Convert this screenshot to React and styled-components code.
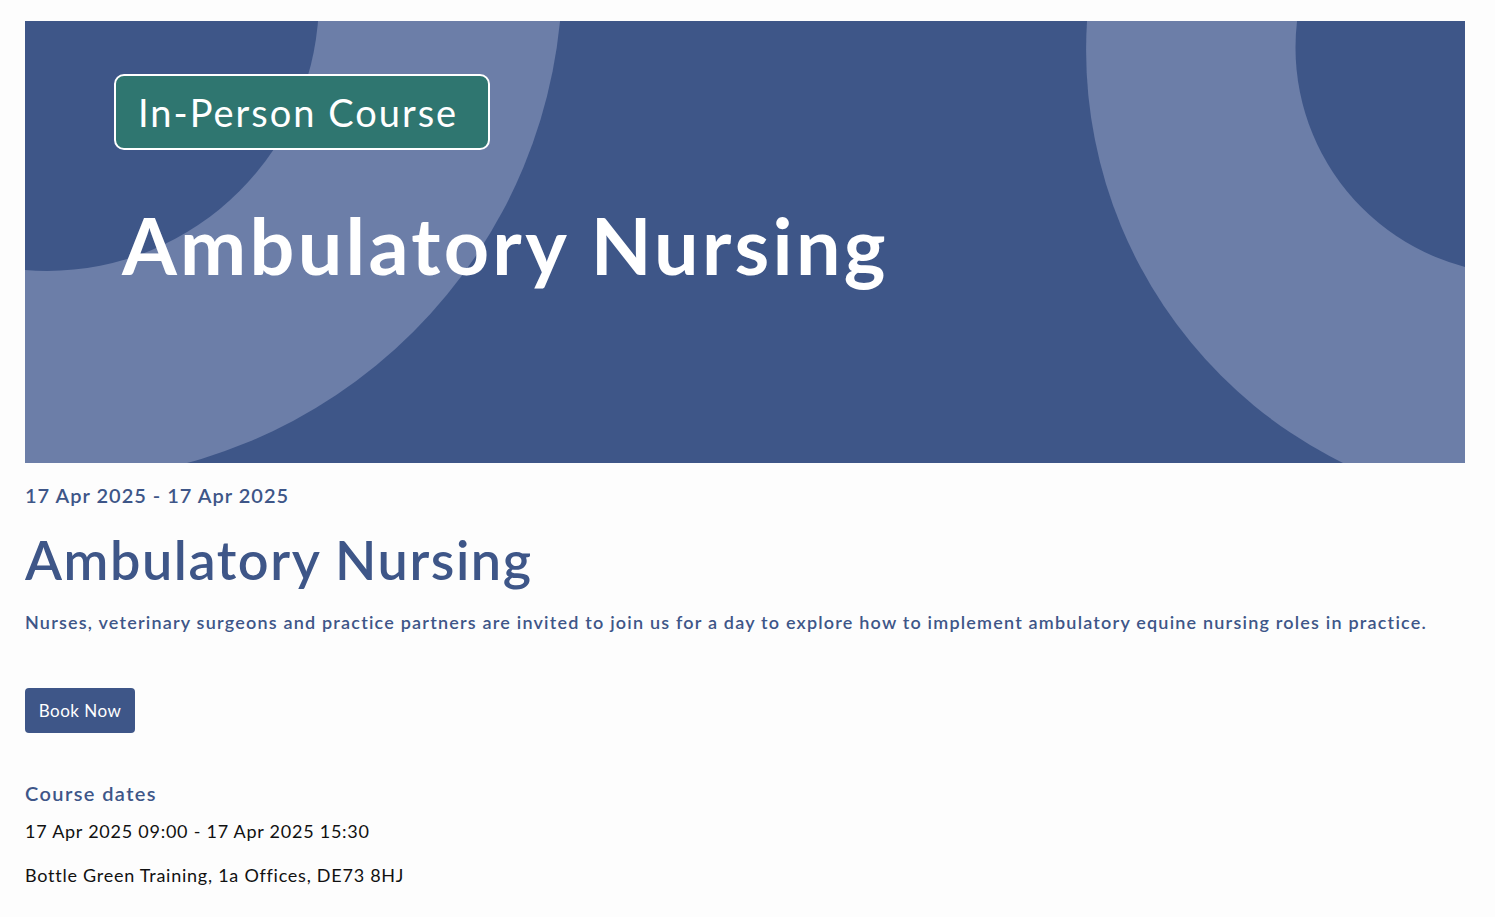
import React from "react";
import styled, { createGlobalStyle } from "styled-components";

const GlobalStyle = createGlobalStyle`
  body {
    margin: 0;
    background: #fdfdfd;
    font-family: Lato, "Open Sans", sans-serif;
  }
`;

const Page = styled.div`
  padding: 21px 30px 30px 25px;
`;

const Banner = styled.div`
  position: relative;
  height: 442px;
  background: #3e5688;
  overflow: hidden;
  padding: 53px 0 0 89px;
  box-sizing: border-box;
`;

const BannerArt = styled.svg`
  position: absolute;
  inset: 0;
  width: 100%;
  height: 100%;
`;

const BannerContent = styled.div`
  position: relative;
  display: flex;
  flex-direction: column;
  align-items: flex-start;
`;

const Badge = styled.div`
  width: 376px;
  height: 76px;
  box-sizing: border-box;
  border: 2px solid #ffffff;
  border-radius: 10px;
  background: #2f7670;
  color: #ffffff;
  font-size: 38px;
  font-weight: 400;
  letter-spacing: 2px;
  display: flex;
  align-items: center;
  padding-left: 22px;
`;

const BannerTitle = styled.h2`
  margin: 55px 0 0 8px;
  color: #ffffff;
  font-size: 79px;
  font-weight: 700;
  line-height: 1;
  letter-spacing: 3.3px;
`;

const DateRange = styled.div`
  margin-top: 20px;
  color: #3e5688;
  font-size: 20px;
  font-weight: 600;
  letter-spacing: 1px;
`;

const Title = styled.h1`
  margin: 23px 0 0;
  color: #3e5688;
  font-size: 54px;
  font-weight: 600;
  line-height: 1.1;
  letter-spacing: 1.55px;
`;

const Lead = styled.p`
  margin: 22px 0 0;
  color: #3e5688;
  font-size: 18px;
  font-weight: 600;
  letter-spacing: 1.2px;
`;

const BookButton = styled.button`
  margin-top: 55px;
  width: 110px;
  height: 45px;
  border: 0;
  border-radius: 4px;
  background: #3e5688;
  color: #ffffff;
  font-family: inherit;
  font-size: 17px;
  letter-spacing: 0.5px;
  cursor: pointer;
`;

const SectionHeading = styled.h3`
  margin: 48px 0 0;
  color: #3e5688;
  font-size: 20px;
  font-weight: 600;
  letter-spacing: 1.4px;
`;

const InfoLine = styled.p`
  margin: ${(p) => p.$gap}px 0 0;
  color: #111111;
  font-size: 18px;
  letter-spacing: 0.75px;
`;

const Content = styled.div`
  display: flex;
  flex-direction: column;
  align-items: flex-start;
`;

export default function App() {
  return (
    <Page>
      <GlobalStyle />
      <Banner>
        <BannerArt viewBox="0 0 1440 442" preserveAspectRatio="none">
          <circle cx="28.6" cy="-49" r="508.8" fill="#6c7ea8" />
          <circle cx="22.2" cy="-21.8" r="271.7" fill="#3e5688" />
          <circle cx="1521.5" cy="29" r="460.4" fill="#6c7ea8" />
          <circle cx="1497.4" cy="26.4" r="226.9" fill="#3e5688" />
        </BannerArt>
        <BannerContent>
          <Badge>In-Person Course</Badge>
          <BannerTitle>Ambulatory Nursing</BannerTitle>
        </BannerContent>
      </Banner>
      <Content>
        <DateRange>17 Apr 2025 - 17 Apr 2025</DateRange>
        <Title>Ambulatory Nursing</Title>
        <Lead>
          Nurses, veterinary surgeons and practice partners are invited to join us for a day to explore how to implement ambulatory equine nursing roles in practice.
        </Lead>
        <BookButton>Book Now</BookButton>
        <SectionHeading>Course dates</SectionHeading>
        <InfoLine $gap={15}>17 Apr 2025 09:00 - 17 Apr 2025 15:30</InfoLine>
        <InfoLine $gap={22}>Bottle Green Training, 1a Offices, DE73 8HJ</InfoLine>
      </Content>
    </Page>
  );
}
